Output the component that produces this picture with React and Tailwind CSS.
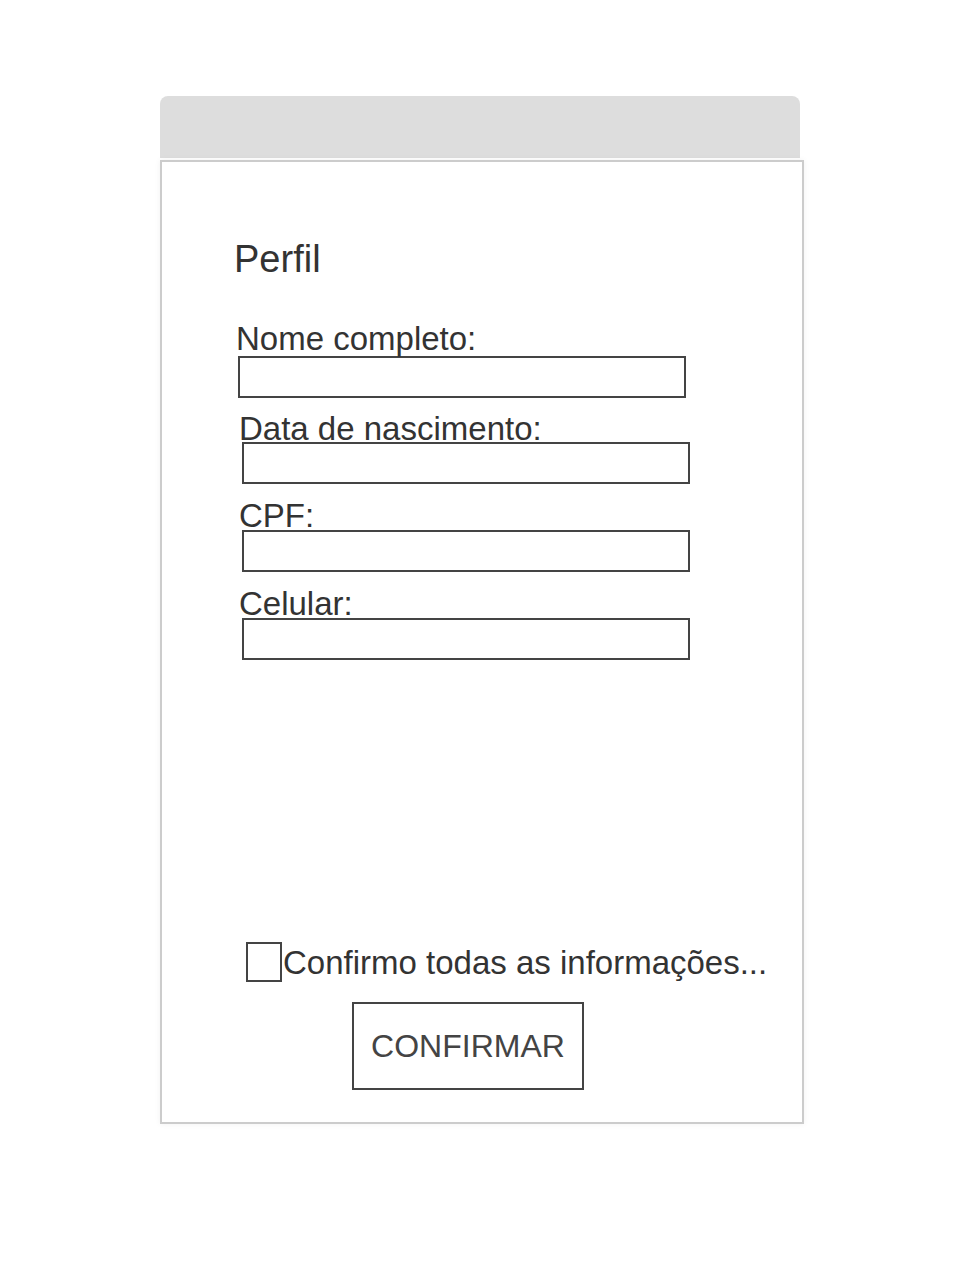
import React from 'react';

const fields = [
    { label: 'Nome completo:', labelClass: 'mt-[44px]', inputClass: 'mt-px ml-[2px]' },
    { label: 'Data de nascimento:', labelClass: 'mt-[14px] ml-[3px]', inputClass: '-mt-[3px] ml-[6px]' },
    { label: 'CPF:', labelClass: 'mt-[15px] ml-[3px]', inputClass: '-mt-[2px] ml-[6px]' },
    { label: 'Celular:', labelClass: 'mt-[15px] ml-[3px]', inputClass: '-mt-[2px] ml-[6px]' },
];

const App = () => {
    return (
        <div className="min-h-[1280px] bg-white pt-[96px] pl-[160px] text-[#333] font-['Liberation_Sans',Arial,sans-serif]">
            <div className="w-[640px] h-[62px] bg-[#dddddd] rounded-t-[8px]" />
            <div className="mt-[2px] w-[644px] h-[964px] border-2 border-[#cccccc] bg-white shadow-[0_0_6px_rgba(0,0,0,0.06)] flex flex-col pl-[72px]">
                <h1 className="mt-[78px] text-[38px] leading-none font-normal">Perfil</h1>

                <div className="flex flex-col pl-[2px]">
                    {fields.map((f) => (
                        <React.Fragment key={f.label}>
                            <label className={`relative z-10 text-[33px] leading-none whitespace-nowrap ${f.labelClass}`}>
                                {f.label}
                            </label>
                            <input
                                type="text"
                                className={`w-[448px] h-[42px] border-2 border-[#444] bg-transparent outline-none ${f.inputClass}`}
                            />
                        </React.Fragment>
                    ))}
                </div>

                <div className="mt-[282px] ml-[12px] flex items-center">
                    <span className="w-[36px] h-[40px] border-2 border-[#444] bg-white shrink-0" />
                    <span className="ml-[1px] text-[33px] leading-none whitespace-nowrap">Confirmo todas as informações...</span>
                </div>

                <button className="mt-[20px] ml-[118px] w-[232px] h-[88px] border-2 border-[#444] bg-white text-[32px] leading-none text-[#444]">
                    CONFIRMAR
                </button>
            </div>
        </div>
    );
};

export default App;
